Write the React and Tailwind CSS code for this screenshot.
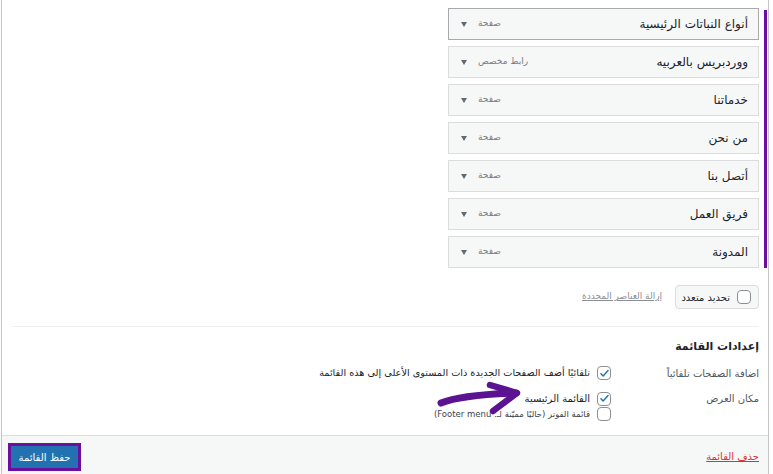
import React from "react";

const items = [
  { title: "أنواع النباتات الرئيسية", type: "صفحة", active: true },
  { title: "ووردبريس بالعربيه", type: "رابط مخصص" },
  { title: "خدماتنا", type: "صفحة" },
  { title: "من نحن", type: "صفحة" },
  { title: "أتصل بنا", type: "صفحة" },
  { title: "فريق العمل", type: "صفحة" },
  { title: "المدونة", type: "صفحة" },
];

function Check({ checked }) {
  return (
    <span className="flex h-[14px] w-[14px] shrink-0 items-center justify-center rounded-[4px] border border-[#8c8f94] bg-white">
      {checked && (
        <svg width="11" height="11" viewBox="0 0 20 20">
          <path d="M3.5 10.5l4 4 9-10" fill="none" stroke="#2271b1" strokeWidth="2.6" strokeLinecap="round" strokeLinejoin="round" />
        </svg>
      )}
    </span>
  );
}

export default function App() {
  return (
    <div
      dir="rtl"
      className="h-[474px] w-[773px] overflow-hidden bg-white font-['DejaVu_Sans',sans-serif] text-[#1d2327]"
    >
      <div className="relative ml-[1px] mr-[4px] flex h-full flex-col border-x border-[#c3c4c7]">
        {/* Menu structure */}
        <div className="flex-1 pr-[9px]">
          <div className="flex w-[311px] flex-col gap-[6px] pt-[8px]">
            {items.map((item) => (
              <div
                key={item.title}
                className={`flex h-[32px] items-center justify-between border bg-[#f6f7f7] pl-[12px] pr-[10px] ${
                  item.active ? "border-[#a7aaad]" : "border-[#dcdcde]"
                }`}
              >
                <span className="text-[12px] text-[#1d2327]">{item.title}</span>
                <span className="flex items-center gap-[11px]">
                  <span className="text-[9px] text-[#787c82]">{item.type}</span>
                  <span className="h-0 w-0 border-x-[3.5px] border-t-[5px] border-x-transparent border-t-[#646970]" />
                </span>
              </div>
            ))}
          </div>

          {/* bulk select */}
          <div className="mt-[17px] flex items-center gap-[13px]">
            <label className="flex h-[24px] w-[84px] items-center gap-[7px] rounded-[4px] border border-[#dcdcde] bg-[#f6f7f7] pr-[7px]">
              <Check />
              <span className="text-[10px]">تحديد متعدد</span>
            </label>
            <span className="text-[9px] text-[#8c8f94] underline">إزالة العناصر المحددة</span>
          </div>

          {/* menu settings */}
          <div className="ml-[10px] mt-[17px] border-t border-[#f0f0f1] pt-[13px]">
            <h3 className="text-[11px] font-bold leading-[14px]">إعدادات القائمة</h3>
            <div className="mt-[12px] flex items-center">
              <span className="w-[148px] text-[10px] text-[#50575e]">اضافة الصفحات تلقائياً</span>
              <span className="flex items-center gap-[7px]">
                <Check checked />
                <span className="text-[9.7px]">تلقائيًا أضف الصفحات الجديدة ذات المستوى الأعلى إلى هذه القائمة</span>
              </span>
            </div>
            <div className="mt-[10px] flex items-start">
              <span className="w-[148px] text-[10px] text-[#50575e]">مكان العرض</span>
              <div className="flex flex-col gap-[1px]">
                <span className="flex items-center gap-[7px]">
                  <Check checked />
                  <span className="text-[10px]">القائمة الرئيسية</span>
                </span>
                <span className="flex items-center gap-[7px]">
                  <Check />
                  <span className="text-[8.5px] text-[#3c434a]">قائمة الفوتر (حاليًا مميّنة لـ: Footer menu)</span>
                </span>
              </div>
            </div>
          </div>
        </div>

        {/* footer */}
        <div className="flex h-[39px] items-start justify-between border-t border-[#dcdcde] bg-[#f6f7f7] pl-[6px] pr-[9px]">
          <span className="mt-[13px] text-[10px] text-[#d63638] underline">حذف القائمة</span>
          <button className="mt-[7px] flex h-[28px] w-[73px] items-center justify-center border-[3px] border-[#6a0f9e] bg-[#2271b1] text-[10px] text-white">
            حفظ القائمة
          </button>
        </div>

        {/* annotations */}
        <div className="absolute right-[1px] top-[10px] h-[258px] w-[3px] bg-[#6a0f9e]" />
        <svg className="absolute left-[434px] top-[381px]" width="92" height="36" viewBox="0 0 92 36">
          <path d="M5 22 C 22 15, 50 13, 80 12" fill="none" stroke="#5c1391" strokeWidth="7" strokeLinecap="round" />
          <path d="M54 4 L81 12 L57 30" fill="none" stroke="#5c1391" strokeWidth="6.5" strokeLinecap="round" strokeLinejoin="round" />
        </svg>
      </div>
    </div>
  );
}
